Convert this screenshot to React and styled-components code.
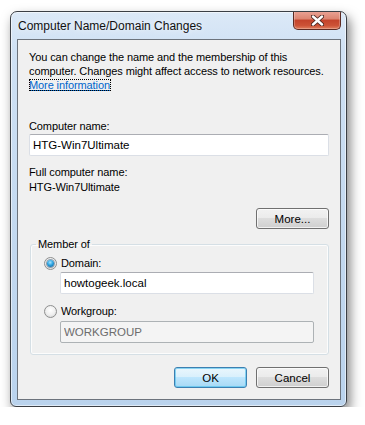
import React, { useState } from 'react';
import styled, { createGlobalStyle } from 'styled-components';

const GlobalStyle = createGlobalStyle`
  html, body {
    margin: 0;
    padding: 0;
    background: #ffffff;
  }
  body {
    font-family: "Liberation Sans", Arial, sans-serif;
    font-size: 11px;
    letter-spacing: -0.1px;
    color: #000;
  }
`;

const Window = styled.div`
  box-sizing: border-box;
  width: 337px;
  height: 396px;
  margin: 11px 0 0 10px;
  border: 1px solid #3b3f45;
  border-radius: 7px 7px 6px 6px;
  background: linear-gradient(180deg, #dce9f7 0%, #cfe1f4 10%, #c2d8ef 60%, #bad3ed 100%);
  box-shadow: inset 0 0 0 1px rgba(255, 255, 255, 0.55), 3px 6px 12px rgba(0, 0, 0, 0.5);
  display: flex;
  flex-direction: column;
  overflow: hidden;
`;

const TitleBar = styled.div`
  height: 27px;
  flex: none;
  display: flex;
  align-items: center;
  justify-content: space-between;
  padding-left: 7px;
  padding-right: 5px;
`;

const Title = styled.span`
  font-size: 12px;
  letter-spacing: 0;
  color: #101010;
  text-shadow: 0 0 6px rgba(255, 255, 255, 0.9);
`;

const CloseButton = styled.div`
  align-self: flex-start;
  margin-top: -1px;
  box-sizing: border-box;
  width: 48px;
  height: 19px;
  border: 1px solid #5d2a22;
  border-top: none;
  border-radius: 0 0 5px 5px;
  background: linear-gradient(180deg, #eba497 0%, #dc8470 45%, #c4432b 50%, #cc5236 80%, #e07f5e 100%);
  box-shadow: inset 0 0 0 1px rgba(255, 255, 255, 0.25);
  display: flex;
  align-items: center;
  justify-content: center;
`;

const Client = styled.div`
  flex: 1;
  margin: 0 5px 6px 6px;
  border: 1px solid #6c737c;
  background: #f0f0f0;
  padding: 10px 11px 0 11px;
  display: flex;
  flex-direction: column;
`;

const Text = styled.div`
  line-height: 14px;
  white-space: nowrap;
  margin-top: ${(p) => p.$top || 0}px;
`;

const LinkText = styled.a`
  display: inline-block;
  color: #0066cc;
  text-decoration: underline;
  outline: 1px dotted #000;
  outline-offset: -1px;
  line-height: 12px;
  padding: 0 1px 0 0;
  cursor: pointer;
`;

const TextInput = styled.input`
  box-sizing: border-box;
  display: block;
  width: ${(p) => p.$width || 300}px;
  height: 22px;
  margin-top: ${(p) => p.$top || 0}px;
  margin-left: ${(p) => p.$left || 0}px;
  padding: 0 3px;
  font-family: inherit;
  font-size: 11.5px;
  color: #000;
  background: #fff;
  border: 1px solid #dbdfe6;
  border-top-color: #abadb3;
  border-radius: 2px;
  outline: none;

  &:disabled {
    background: #f4f4f4;
    color: #6d6d6d;
    border-color: #adb2b5;
  }
`;

const ButtonRow = styled.div`
  display: flex;
  justify-content: flex-end;
  gap: 9px;
  margin-top: ${(p) => p.$top || 0}px;
`;

const Button = styled.button`
  box-sizing: border-box;
  width: 73px;
  height: 21px;
  padding: 0;
  font-family: inherit;
  font-size: 11.5px;
  color: #000;
  border: 1px solid ${(p) => (p.$default ? '#3c7fb1' : '#707070')};
  border-radius: 3px;
  background: ${(p) =>
    p.$default
      ? 'linear-gradient(180deg, #eaf6fd 0%, #d9f0fc 48%, #bee6fd 50%, #a7d9f5 100%)'
      : 'linear-gradient(180deg, #f2f2f2 0%, #ebebeb 48%, #dddddd 50%, #cfcfcf 100%)'};
  box-shadow: inset 0 0 0 1px ${(p) => (p.$default ? 'rgba(72, 190, 235, 0.6)' : 'rgba(255, 255, 255, 0.7)')};
`;

const Group = styled.fieldset`
  margin: 8px 0 0 1px;
  padding: 0 14px 11px 5px;
  border: 1px solid #d5dfe5;
  border-radius: 3px;
  box-shadow: inset 0 0 0 1px rgba(255, 255, 255, 0.8);
`;

const Legend = styled.legend`
  padding: 0 2px;
  line-height: 14px;
`;

const RadioRow = styled.label`
  display: flex;
  align-items: center;
  gap: 4px;
  height: 14px;
  margin-top: ${(p) => p.$top || 0}px;
  margin-left: 8px;
  line-height: 14px;
`;

const RadioDot = styled.span`
  box-sizing: border-box;
  width: 13px;
  height: 13px;
  border-radius: 50%;
  border: 1px solid #8e8f8f;
  background: radial-gradient(circle at 50% 40%, #ffffff 0%, #f0f0f0 50%, #cfd0d0 100%);
  display: flex;
  align-items: center;
  justify-content: center;

  &::after {
    content: '';
    display: ${(p) => (p.$checked ? 'block' : 'none')};
    width: 7px;
    height: 7px;
    border-radius: 50%;
    background: radial-gradient(circle at 45% 35%, #a8e4ff 0%, #2da4e1 45%, #0d4f85 100%);
    box-shadow: 0 0 0 1px rgba(24, 60, 90, 0.45);
  }
`;

function CloseIcon() {
  return (
    <svg width="13" height="11" viewBox="0 0 13 11">
      <path d="M2 1.5 L11 9.5 M11 1.5 L2 9.5" stroke="#4a2620" strokeWidth="4.2" strokeLinecap="round" />
      <path d="M2 1.5 L11 9.5 M11 1.5 L2 9.5" stroke="#ffffff" strokeWidth="2.4" strokeLinecap="round" />
    </svg>
  );
}

export default function App() {
  const [member, setMember] = useState('domain');

  return (
    <>
      <GlobalStyle />
      <Window>
        <TitleBar>
          <Title>Computer Name/Domain Changes</Title>
          <CloseButton>
            <CloseIcon />
          </CloseButton>
        </TitleBar>
        <Client>
          <Text>You can change the name and the membership of this</Text>
          <Text>computer. Changes might affect access to network resources.</Text>
          <Text>
            <LinkText>More information</LinkText>
          </Text>
          <Text $top={27}>Computer name:</Text>
          <TextInput $top={1} defaultValue="HTG-Win7Ultimate" />
          <Text $top={9}>Full computer name:</Text>
          <Text $top={1}>HTG-Win7Ultimate</Text>
          <ButtonRow $top={14}>
            <Button>More...</Button>
          </ButtonRow>
          <Group>
            <Legend>Member of</Legend>
            <RadioRow $top={5} onClick={() => setMember('domain')}>
              <RadioDot $checked={member === 'domain'} />
              Domain:
            </RadioRow>
            <TextInput $top={2} $left={24} $width={254} defaultValue="howtogeek.local" />
            <RadioRow $top={10} onClick={() => setMember('workgroup')}>
              <RadioDot $checked={member === 'workgroup'} />
              Workgroup:
            </RadioRow>
            <TextInput $top={3} $left={24} $width={254} defaultValue="WORKGROUP" disabled />
          </Group>
          <ButtonRow $top={12}>
            <Button $default>OK</Button>
            <Button>Cancel</Button>
          </ButtonRow>
        </Client>
      </Window>
    </>
  );
}
